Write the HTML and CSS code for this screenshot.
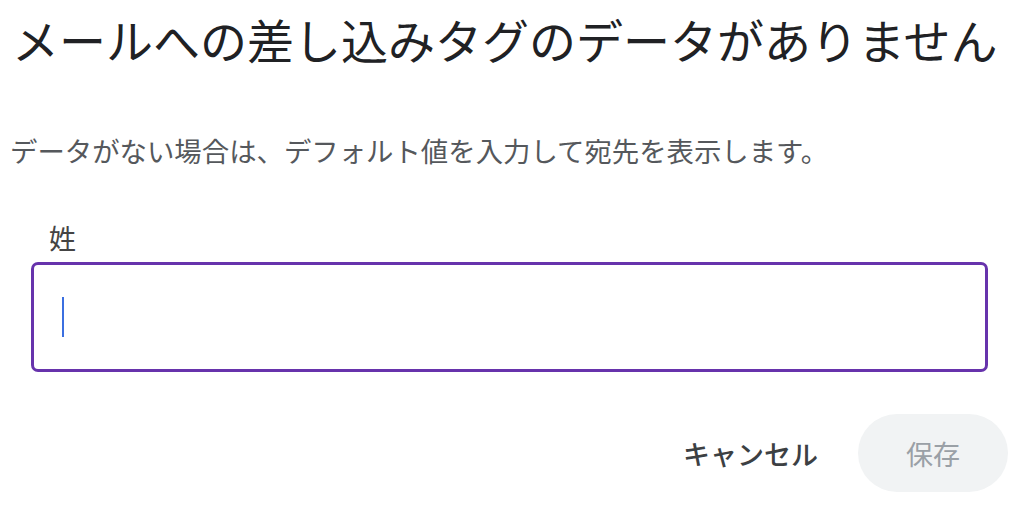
FILE: index.html
```html
<!DOCTYPE html>
<html>
<head>
  <title>差し込みタグ</title>
  <link rel="stylesheet" href="styles.css">
</head>
<body>

<div class="dialog">
  <h1 class="title">メールへの差し込みタグのデータがありません</h1>
  <p class="desc">データがない場合は、デフォルト値を入力して宛先を表示します。</p>

  <label class="field">
    <span class="field-label">姓</span>
    <span class="field-box"><span class="caret"></span></span>
  </label>

  <div class="actions">
    <button class="btn-text">キャンセル</button>
    <button class="btn-save" disabled>保存</button>
  </div>
</div>

</body>
</html>
```

FILE: styles.css
```css
body {
  margin: 0;
  background: white;
  font-family: 'Noto Sans CJK JP', 'Noto Sans', sans-serif;
}

.dialog {
  padding: 4px 16px 0 12px;
}

.title {
  margin: 0;
  font-size: 47px;
  font-weight: normal;
  line-height: 70px;
  color: #202124;
  white-space: nowrap;
}

.desc {
  margin: 56px 0 0 -2px;
  font-size: 27.4px;
  line-height: 40px;
  color: #55585c;
}

.field {
  display: block;
  margin: 50px 0 0 19px;
  width: 957px;
}

.field-label {
  display: block;
  padding-left: 18px;
  font-size: 27px;
  line-height: 36px;
  color: #444;
}

.field-box {
  display: flex;
  align-items: center;
  margin-top: 6px;
  height: 104px;
  border: 3px solid #6733ac;
  border-radius: 7px;
  padding-left: 28px;
}

.caret {
  width: 2px;
  height: 40px;
  background: #3b6fe0;
}

.actions {
  display: flex;
  justify-content: flex-end;
  align-items: center;
  gap: 40px;
  margin-top: 42px;
}

.btn-text {
  background: none;
  border: none;
  font-family: inherit;
  font-size: 27px;
  font-weight: 500;
  color: #3c4043;
  padding: 0;
}

.btn-save {
  width: 150px;
  height: 78px;
  border: none;
  border-radius: 39px;
  background: #f1f3f4;
  font-family: inherit;
  font-size: 27px;
  color: #9aa0a6;
}
```
